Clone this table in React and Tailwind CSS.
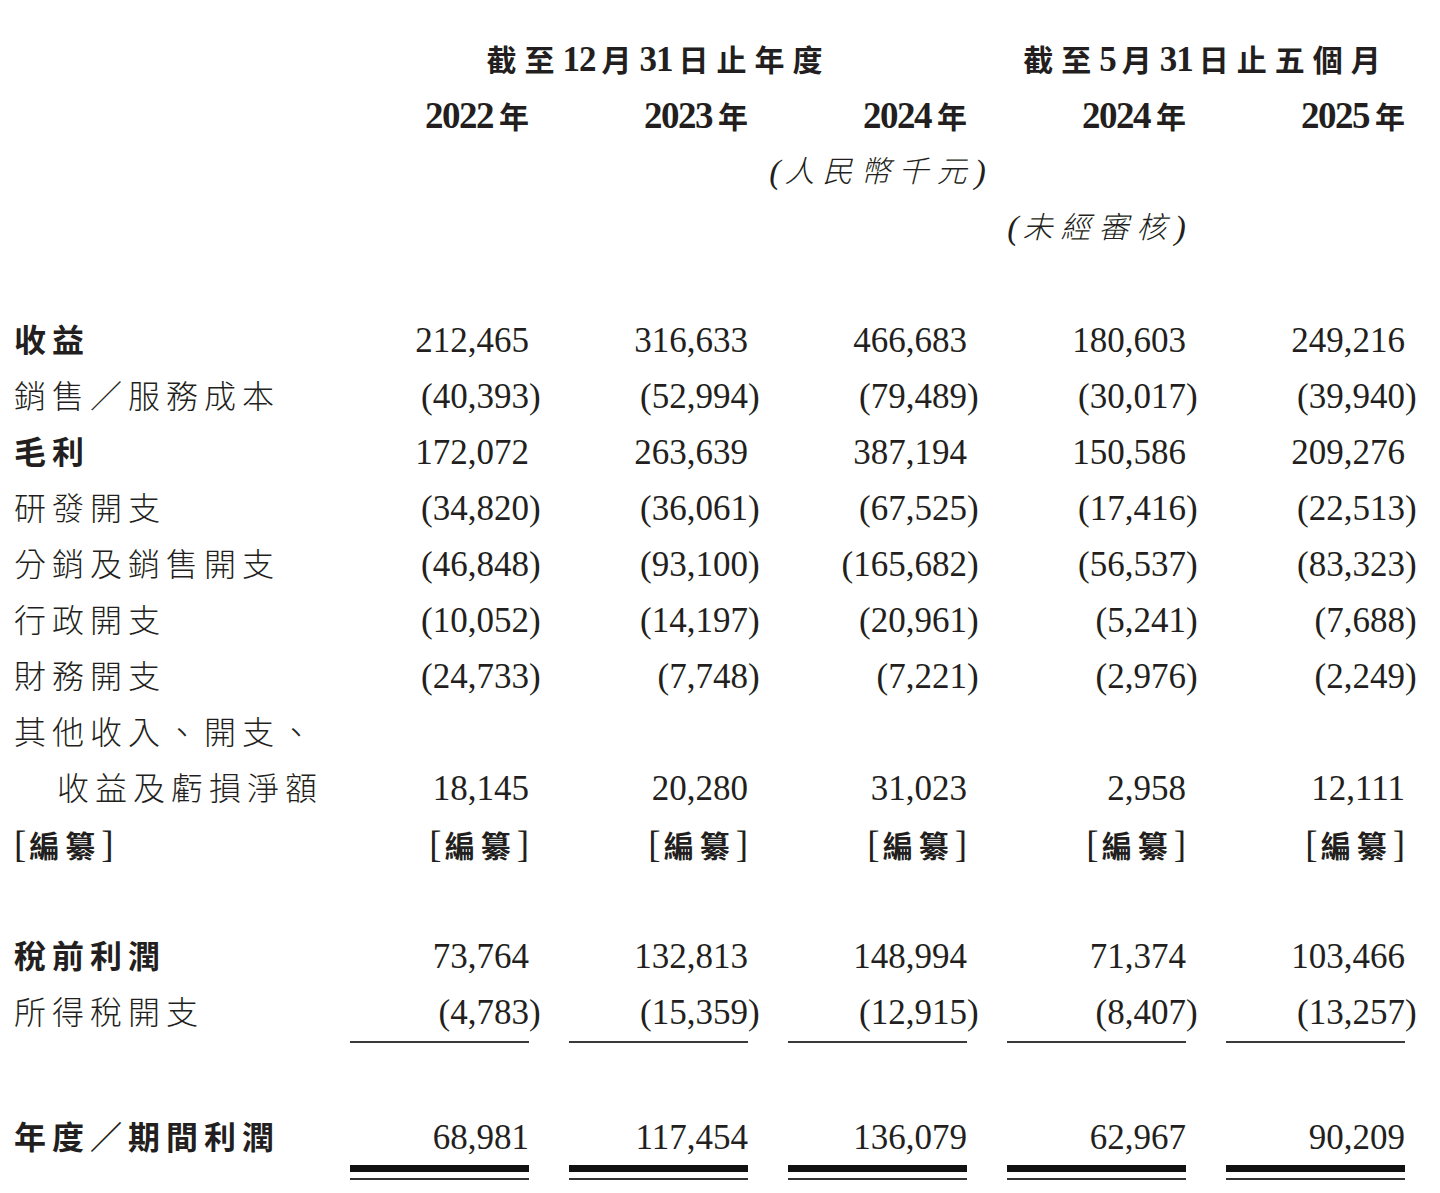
const serif = "font-['Liberation_Serif','Noto_Sans_CJK_TC',serif]";
const row = 'grid grid-cols-[296px_repeat(5,179px)] gap-x-[40px] items-center';

const rows = [
  { label: '收益', bold: true, v: ['212,465', '316,633', '466,683', '180,603', '249,216'] },
  { label: '銷售／服務成本', v: ['(40,393)', '(52,994)', '(79,489)', '(30,017)', '(39,940)'] },
  { label: '毛利', bold: true, v: ['172,072', '263,639', '387,194', '150,586', '209,276'] },
  { label: '研發開支', v: ['(34,820)', '(36,061)', '(67,525)', '(17,416)', '(22,513)'] },
  { label: '分銷及銷售開支', v: ['(46,848)', '(93,100)', '(165,682)', '(56,537)', '(83,323)'] },
  { label: '行政開支', v: ['(10,052)', '(14,197)', '(20,961)', '(5,241)', '(7,688)'] },
  { label: '財務開支', v: ['(24,733)', '(7,748)', '(7,221)', '(2,976)', '(2,249)'] },
  { label: '其他收入、開支、', v: null },
  { label: '收益及虧損淨額', indent: true, v: ['18,145', '20,280', '31,023', '2,958', '12,111'] },
];

function Num({ v }) {
  const neg = v.startsWith('(');
  return (
    <div className="text-right text-[35px] text-[#231f20]">
      {neg ? (
        <>
          {v.slice(0, -1)}
          <span className="inline-block w-0">)</span>
        </>
      ) : (
        v
      )}
    </div>
  );
}

function Label({ children, bold, indent }) {
  return (
    <div
      className={`whitespace-nowrap text-[32px] tracking-[6px] text-[#231f20] ${bold ? 'font-bold' : 'font-light'} ${indent ? 'pl-[43px]' : ''}`}
    >
      {children}
    </div>
  );
}

function Redacted({ right }) {
  return (
    <div className={`whitespace-nowrap text-[#231f20] ${right ? 'text-right' : ''}`}>
      <span className="text-[37px] font-light">[</span>
      <span className="text-[30px] font-bold tracking-[6px] ml-[3px]">編纂</span>
      <span className="text-[37px] font-light">]</span>
    </div>
  );
}

function Year({ y }) {
  return (
    <div className="text-right text-[#231f20] whitespace-nowrap">
      <span className="text-[37px] font-bold tracking-[-1.5px]">{y}</span>
      <span className="text-[30px] font-bold ml-[6px]">年</span>
    </div>
  );
}

function Dig({ children }) {
  return <span className="text-[35px] font-bold tracking-[-1px] mr-[6px]">{children}</span>;
}

function Note({ children }) {
  return (
    <div className="flex justify-center whitespace-nowrap text-[30px] italic font-light text-[#231f20]">
      <span className="text-[34px] pr-[4px]">(</span>
      <span className="tracking-[8px]">{children}</span>
      <span className="text-[34px]">)</span>
    </div>
  );
}

export default function App() {
  return (
    <div className={`${serif} bg-white w-[1440px] h-[1193px] pl-[14px] pt-[32px] leading-[56px] overflow-hidden`}>
      {/* header */}
      <div className={`${row} h-14`}>
        <div />
        <div className="col-span-3 text-center text-[30px] font-bold tracking-[8px] text-[#231f20] whitespace-nowrap">
          截至<Dig>12</Dig>月<Dig>31</Dig>日止年度
        </div>
        <div className="col-span-2 text-center text-[30px] font-bold tracking-[8px] text-[#231f20] whitespace-nowrap">
          截至<Dig>5</Dig>月<Dig>31</Dig>日止五個月
        </div>
      </div>
      <div className={`${row} h-14`}>
        <div />
        {['2022', '2023', '2024', '2024', '2025'].map((y, i) => (
          <Year key={i} y={y} />
        ))}
      </div>
      <div className={`${row} h-14`}>
        <div />
        <div />
        <div />
        <Note>人民幣千元</Note>
      </div>
      <div className={`${row} h-14`}>
        <div />
        <div />
        <div />
        <div />
        <Note>未經審核</Note>
      </div>

      <div className="h-[57px]" />

      {rows.map((r, i) => (
        <div key={i} className={`${row} h-14`}>
          <Label bold={r.bold} indent={r.indent}>
            {r.label}
          </Label>
          {r.v ? r.v.map((v, j) => <Num key={j} v={v} />) : null}
        </div>
      ))}
      <div className={`${row} h-14`}>
        <Redacted />
        {[0, 1, 2, 3, 4].map((j) => (
          <Redacted key={j} right />
        ))}
      </div>

      <div className="h-14" />

      <div className={`${row} h-14`}>
        <Label bold>稅前利潤</Label>
        {['73,764', '132,813', '148,994', '71,374', '103,466'].map((v, j) => (
          <Num key={j} v={v} />
        ))}
      </div>
      <div className={`${row} h-[58px] items-stretch`}>
        <Label>所得稅開支</Label>
        {['(4,783)', '(15,359)', '(12,915)', '(8,407)', '(13,257)'].map((v, j) => (
          <div key={j} className="border-b-2 border-[#3a3a3a]">
            <Num v={v} />
          </div>
        ))}
      </div>

      <div className="h-[69px]" />

      <div className={`${row} items-start`}>
        <div className="h-[52px] leading-[52px]">
          <Label bold>年度／期間利潤</Label>
        </div>
        {['68,981', '117,454', '136,079', '62,967', '90,209'].map((v, j) => (
          <div key={j} className="flex flex-col">
            <div className="h-[52px] leading-[52px]">
              <Num v={v} />
            </div>
            <div className="mt-[1px] h-[7px] bg-[#111]" />
            <div className="mt-[6px] h-[2px] bg-[#333]" />
          </div>
        ))}
      </div>
    </div>
  );
}
